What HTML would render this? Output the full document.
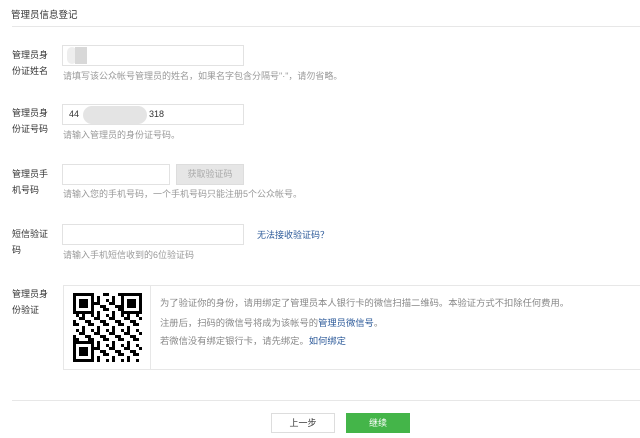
<!DOCTYPE html>
<html><head><meta charset="utf-8"><style>
*{margin:0;padding:0;box-sizing:border-box}
body{width:640px;height:438px;background:#fff;font-family:"Liberation Sans","Noto Sans CJK SC",sans-serif;font-size:9px;color:#333;position:relative;overflow:hidden}
.a{position:absolute;white-space:nowrap}
.lab{font-size:9px;line-height:16px;color:#333}
.inp{position:absolute;border:1px solid #e2e2e2;background:#fff;height:21px}
.hint{color:#999;font-size:9px}
.link{color:#2e5b9a}
</style></head><body>
<div class="a" style="left:11px;top:7px;font-size:9.5px">管理员信息登记</div>
<div class="a" style="left:12px;top:26px;width:628px;height:1px;background:#e7e7e7"></div>

<div class="a lab" style="left:12px;top:47px">管理员身<br>份证姓名</div>
<div class="inp" style="left:62px;top:45px;width:182px"><div style="position:absolute;left:4px;top:1px;width:10px;height:17px;background:#eee;border-radius:5px"></div><div style="position:absolute;left:12px;top:1px;width:12px;height:17px;background:#d8d8d8"></div></div>
<div class="a hint" style="left:63px;top:69px">请填写该公众帐号管理员的姓名，如果名字包含分隔号"·"，请勿省略。</div>

<div class="a lab" style="left:12px;top:105px">管理员身<br>份证号码</div>
<div class="inp" style="left:62px;top:104px;width:182px"><span style="position:absolute;left:6px;top:4px;font-size:9px">44</span><div style="position:absolute;left:20px;top:1px;width:64px;height:18px;background:#e4e4e4;border-radius:9px"></div><span style="position:absolute;left:86px;top:4px;font-size:9px">318</span></div>
<div class="a hint" style="left:63px;top:128px">请输入管理员的身份证号码。</div>

<div class="a lab" style="left:12px;top:166px">管理员手<br>机号码</div>
<div class="inp" style="left:62px;top:164px;width:108px"></div>
<div class="a" style="left:176px;top:164px;width:68px;height:21px;background:#e6e6e6;border:1px solid #ddd;color:#aaa;text-align:center;line-height:19px">获取验证码</div>
<div class="a hint" style="left:63px;top:187px">请输入您的手机号码，一个手机号码只能注册5个公众帐号。</div>

<div class="a lab" style="left:12px;top:226px">短信验证<br>码</div>
<div class="inp" style="left:62px;top:224px;width:182px"></div>
<div class="a link" style="left:257px;top:228px">无法接收验证码？</div>
<div class="a hint" style="left:63px;top:248px">请输入手机短信收到的6位验证码</div>

<div class="a lab" style="left:12px;top:286px">管理员身<br>份验证</div>
<div class="a" style="left:63px;top:285px;width:590px;height:85px;border:1px solid #e7e7e7"></div>
<div class="a" style="left:150px;top:285px;width:1px;height:85px;background:#e7e7e7"></div>
<svg class="a" style="left:73px;top:293px" width="69" height="69" viewBox="0 0 23 23">
<defs><pattern id="p" width="5" height="5" patternUnits="userSpaceOnUse"><rect x="0" y="0" width="2" height="1"/><rect x="3" y="1" width="1" height="2"/><rect x="1" y="2" width="1" height="1"/><rect x="0" y="4" width="1" height="1"/><rect x="2" y="3" width="2" height="1"/><rect x="4" y="4" width="1" height="1"/></pattern></defs>
<rect width="23" height="23" fill="url(#p)"/>
<g><rect x="0" y="0" width="7" height="7" fill="#fff"/><rect x=".5" y=".5" width="6" height="6" fill="none" stroke="#000"/><rect x="2" y="2" width="3" height="3"/>
<rect x="16" y="0" width="7" height="7" fill="#fff"/><rect x="16.5" y=".5" width="6" height="6" fill="none" stroke="#000"/><rect x="18" y="2" width="3" height="3"/>
<rect x="0" y="16" width="7" height="7" fill="#fff"/><rect x=".5" y="16.5" width="6" height="6" fill="none" stroke="#000"/><rect x="2" y="18" width="3" height="3"/></g>
</svg>
<div class="a hint" style="left:160px;top:295px;color:#888;font-size:9.3px">为了验证你的身份，请用绑定了管理员本人银行卡的微信扫描二维码。本验证方式不扣除任何费用。</div>
<div class="a hint" style="left:160px;top:315px;color:#888;font-size:9.3px">注册后，扫码的微信号将成为该帐号的<span class="link">管理员微信号</span>。</div>
<div class="a hint" style="left:160px;top:333px;color:#888;font-size:9.3px">若微信没有绑定银行卡，请先绑定。<span class="link">如何绑定</span></div>

<div class="a" style="left:12px;top:400px;width:628px;height:1px;background:#e7e7e7"></div>
<div class="a" style="left:271px;top:413px;width:64px;height:20px;border:1px solid #ddd;background:#fff;text-align:center;line-height:18px">上一步</div>
<div class="a" style="left:346px;top:413px;width:64px;height:20px;background:#44b549;color:#fff;text-align:center;line-height:20px">继续</div>
</body></html>
